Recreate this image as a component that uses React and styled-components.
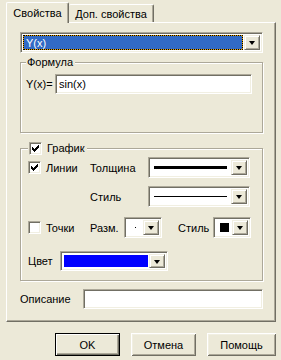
import React from "react";
import styled, { createGlobalStyle } from "styled-components";

const face = "#ece9d8";
const light = "#f1efe2";
const shadow = "#aca899";
const dark = "#716f64";

const GlobalStyle = createGlobalStyle`
  * { box-sizing: border-box; }
  body { margin: 0; background: ${face}; }
`;

const Window = styled.div`
  width: 281px;
  height: 360px;
  padding-top: 2px;
  background: ${face};
  font-family: "Liberation Sans", Arial, sans-serif;
  font-size: 11px;
  color: #000;
  display: flex;
  flex-direction: column;
`;

const TabStrip = styled.div`
  display: flex;
  align-items: flex-end;
  height: 20px;
  padding-left: 6px;
  position: relative;
  z-index: 1;
`;

const Tab = styled.div`
  display: flex;
  align-items: center;
  justify-content: center;
  width: ${(p) => (p.$active ? 63 : 85)}px;
  height: ${(p) => (p.$active ? 21 : 18)}px;
  margin-bottom: ${(p) => (p.$active ? -1 : 0)}px;
  background: ${face};
  border-top: 1px solid #fff;
  border-left: ${(p) => (p.$active ? "1px solid #fff" : "none")};
  border-right: 1px solid ${dark};
  box-shadow: inset -1px 0 0 ${shadow};
  border-radius: 2px 2px 0 0;
  padding-bottom: ${(p) => (p.$active ? 1 : 0)}px;
`;

const Panel = styled.div`
  margin-left: 6px;
  width: 270px;
  height: 300px;
  border-top: 1px solid #fff;
  border-left: 1px solid #fff;
  border-right: 1px solid ${dark};
  border-bottom: 1px solid ${dark};
  box-shadow: inset -1px -1px 0 ${shadow};
  padding: 9px 12px 0 13px;
  display: flex;
  flex-direction: column;
`;

const Group = styled.fieldset`
  margin: ${(p) => p.$top}px 0 0 0;
  padding: 0;
  min-width: 0;
  border: 1px solid ${shadow};
  box-shadow: inset 1px 1px 0 #fff, 1px 1px 0 #fff;
`;

const Legend = styled.legend`
  margin-left: ${(p) => p.$indent}px;
  padding: 0 2px 0 1px;
  line-height: 13px;
  height: 13px;
  display: flex;
  align-items: center;
  gap: 5px;
  background: ${face};
`;

const GroupBody = styled.div`
  padding: ${(p) => p.$pad};
  display: flex;
  flex-direction: column;
`;

const Row = styled.div`
  display: flex;
  align-items: center;
  margin-top: ${(p) => p.$top || 0}px;
  padding-left: ${(p) => p.$indent || 0}px;
`;

const Label = styled.span`
  width: ${(p) => (p.$w ? `${p.$w}px` : "auto")};
  flex: none;
  white-space: nowrap;
`;

const Sunken = styled.div`
  display: flex;
  width: ${(p) => p.$w}px;
  height: ${(p) => p.$h || 21}px;
  flex: none;
  border-top: 1px solid ${shadow};
  border-left: 1px solid ${shadow};
  border-right: 1px solid #fff;
  border-bottom: 1px solid #fff;
  box-shadow: inset 1px 1px 0 ${dark}, inset -1px -1px 0 ${light};
  padding: 2px;
  background: #fff;
`;

const Value = styled.div`
  flex: 1;
  display: flex;
  align-items: center;
  justify-content: ${(p) => p.$justify || "flex-start"};
  padding: ${(p) => p.$pad || "0 2px"};
  min-width: 0;
`;

const Selection = styled.div`
  flex: 1;
  align-self: stretch;
  display: flex;
  align-items: center;
  padding-left: 2px;
  color: #fff;
  border: 1px dotted #000;
  background: linear-gradient(#316ac5, #316ac5) padding-box, #e8a200 border-box;
`;

const ArrowButton = styled.div`
  width: 16px;
  flex: none;
  display: flex;
  align-items: center;
  justify-content: center;
  background: ${face};
  border-top: 1px solid ${light};
  border-left: 1px solid ${light};
  border-right: 1px solid ${dark};
  border-bottom: 1px solid ${dark};
  box-shadow: inset 1px 1px 0 #fff, inset -1px -1px 0 ${shadow};
`;

const Triangle = styled.span`
  width: 0;
  height: 0;
  border-left: 3.5px solid transparent;
  border-right: 3.5px solid transparent;
  border-top: 4px solid #000;
  margin-top: 1px;
`;

const LineSample = styled.div`
  flex: 1;
  height: ${(p) => p.$weight}px;
  background: #000;
  margin-right: 2px;
`;

const Dot = styled.div`
  width: 1px;
  height: 1px;
  background: #000;
`;

const Square = styled.div`
  width: 9px;
  height: 9px;
  background: #000;
`;

const Swatch = styled.div`
  flex: 1;
  align-self: stretch;
  background: ${(p) => p.$color};
  margin: 1px 1px 1px 1px;
`;

const Field = styled(Sunken)`
  height: 20px;
  padding: 2px 3px;
  align-items: center;
`;

const Box = styled.div`
  width: 13px;
  height: 13px;
  flex: none;
  background: #fff;
  border-top: 1px solid ${shadow};
  border-left: 1px solid ${shadow};
  border-right: 1px solid #fff;
  border-bottom: 1px solid #fff;
  box-shadow: inset 1px 1px 0 ${dark}, inset -1px -1px 0 ${light};
  display: flex;
  align-items: center;
  justify-content: center;
`;

const CheckLabel = styled.div`
  display: flex;
  align-items: center;
  gap: 5px;
  width: ${(p) => (p.$w ? `${p.$w}px` : "auto")};
  flex: none;
`;

const Buttons = styled.div`
  display: flex;
  justify-content: flex-end;
  gap: 11px;
  margin-top: 11px;
  padding-right: 5px;
`;

const Button = styled.div`
  width: ${(p) => p.$w}px;
  height: 23px;
  display: flex;
  align-items: center;
  justify-content: center;
  background: ${face};
  border: ${(p) => (p.$default ? "1px solid #000" : "none")};
  padding: ${(p) => (p.$default ? 0 : 0)};
  box-shadow: ${(p) =>
    p.$default
      ? `inset 1px 1px 0 #fff, inset -1px -1px 0 ${dark}, inset -2px -2px 0 ${shadow}`
      : `inset 1px 1px 0 #fff, inset -1px -1px 0 ${dark}, inset 2px 2px 0 ${light}, inset -2px -2px 0 ${shadow}`};
`;

const Check = ({ checked }) => (
  <Box>
    {checked && (
      <svg width="7" height="7" viewBox="0 0 7 7" shapeRendering="crispEdges">
        <path d="M0 2h1v1h1v1h1V3h1V2h1V1h1V0h1v3H6v1H5v1H4v1H3v1H2V6H1V5H0z" fill="#000" />
      </svg>
    )}
  </Box>
);

const Combo = ({ w, h, pad, justify, children }) => (
  <Sunken $w={w} $h={h}>
    <Value $pad={pad} $justify={justify}>{children}</Value>
    <ArrowButton>
      <Triangle />
    </ArrowButton>
  </Sunken>
);

export default function App() {
  return (
    <Window>
      <GlobalStyle />
      <TabStrip>
        <Tab $active>Свойства</Tab>
        <Tab>Доп. свойства</Tab>
      </TabStrip>
      <Panel>
        <Combo w={243} pad="0 1px 0 0">
          <Selection>Y(x)</Selection>
        </Combo>

        <Group $top={3}>
          <Legend $indent={5}>Формула</Legend>
          <GroupBody $pad="5px 10px 38px 5px">
            <Row>
              <Label $w={29}>Y(x)=</Label>
              <Field $w={197}>sin(x)</Field>
            </Row>
          </GroupBody>
        </Group>

        <Group $top={9}>
          <Legend $indent={7}>
            <Check checked />
            <span>График</span>
          </Legend>
          <GroupBody $pad="2px 0 9px 7px">
            <Row>
              <CheckLabel $w={62}>
                <Check checked />
                <span>Линии</span>
              </CheckLabel>
              <Label $w={58}>Толщина</Label>
              <Combo w={102} pad="0 2px 0 3px">
                <LineSample $weight={3} />
              </Combo>
            </Row>
            <Row $top={8} $indent={62}>
              <Label $w={58}>Стиль</Label>
              <Combo w={102} pad="0 2px 0 3px">
                <LineSample $weight={1} />
              </Combo>
            </Row>
            <Row $top={10}>
              <CheckLabel $w={62}>
                <Check />
                <span>Точки</span>
              </CheckLabel>
              <Label $w={34}>Разм.</Label>
              <Combo w={38} justify="center">
                <Dot />
              </Combo>
              <Label $w={35} style={{ marginLeft: 16 }}>Стиль</Label>
              <Combo w={38} justify="center">
                <Square />
              </Combo>
            </Row>
            <Row $top={13}>
              <Label $w={32}>Цвет</Label>
              <Combo w={108} h={20} pad="0">
                <Swatch $color="#0000ff" />
              </Combo>
            </Row>
          </GroupBody>
        </Group>

        <Row $top={8}>
          <Label $w={63}>Описание</Label>
          <Field $w={180} />
        </Row>
      </Panel>
      <Buttons>
        <Button $w={65} $default>OK</Button>
        <Button $w={65}>Отмена</Button>
        <Button $w={69}>Помощь</Button>
      </Buttons>
    </Window>
  );
}
